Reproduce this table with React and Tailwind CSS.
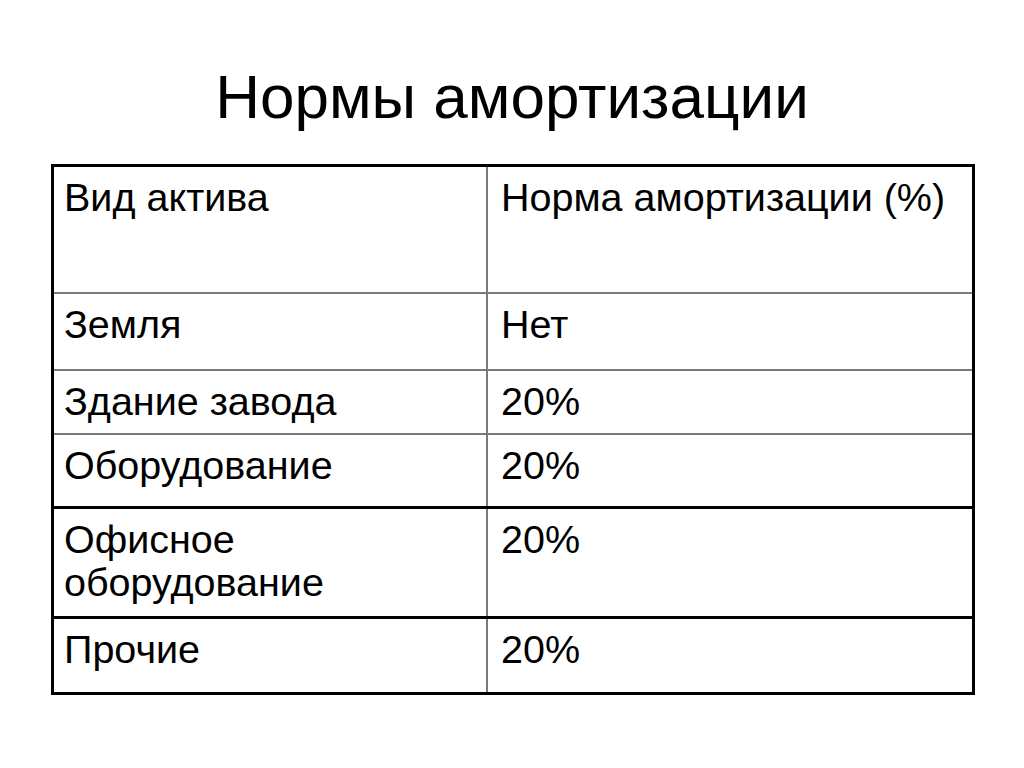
import React from "react";

const rows = [
  { name: "Вид актива", rate: "Норма амортизации (%)", h: "h-[125px]", line: "" },
  { name: "Земля", rate: "Нет", h: "h-[77px]", line: "border-t-2 border-[#7a7a7a]" },
  { name: "Здание завода", rate: "20%", h: "h-[64px]", line: "border-t-2 border-[#7a7a7a]" },
  { name: "Оборудование", rate: "20%", h: "h-[73px]", line: "border-t-2 border-[#7a7a7a]" },
  { name: "Офисное оборудование", rate: "20%", h: "h-[110px]", line: "border-t-[3px] border-black" },
  { name: "Прочие", rate: "20%", h: "h-[76px]", line: "border-t-[3px] border-black" },
];

export default function App() {
  return (
    <div className="w-[1024px] h-[768px] bg-white text-black font-['Liberation_Sans',Arial,sans-serif] overflow-hidden">
      <h1 className="pt-[66px] text-center text-[62px] leading-none font-normal">
        Нормы амортизации
      </h1>
      <div className="mt-[36px] ml-[51px] w-[924px] h-[531px] border-[3px] border-black flex flex-col">
        {rows.map((row, i) => (
          <div key={i} className={`flex box-border ${row.h} ${row.line}`}>
            <div className="w-[434px] shrink-0 border-r-2 border-[#7a7a7a] pl-[10px] pt-[9px] pr-[40px] text-[39.5px] leading-[43px]">
              {row.name}
            </div>
            <div className="flex-1 pl-[13px] pt-[9px] text-[39.5px] leading-[43px]">
              {row.rate}
            </div>
          </div>
        ))}
      </div>
    </div>
  );
}
